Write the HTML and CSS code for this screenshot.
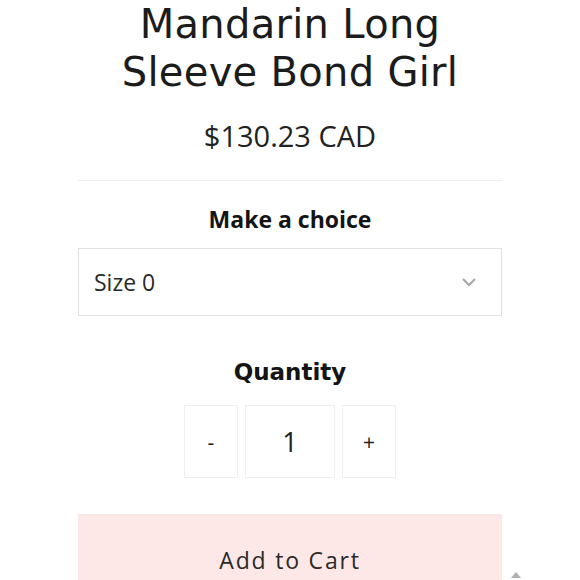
FILE: index.html
```html
<!DOCTYPE html>
<html lang="en">
    <head>
        <meta charset="UTF-8">
        <meta name="viewport" content="width=device-width, initial-scale=1.0">
        <title>Mandarin Long Sleeve Bond Girl</title>
        <link rel="stylesheet" href="styles.css">
    </head>
    <body>
        <div class="producto">
            <h1 class="titulo">Mandarin Long<br>Sleeve Bond Girl</h1>
            <p class="precio">$130.23 CAD</p>

            <!-- Selector de talla -->
            <h2 class="etiqueta">Make a choice</h2>
            <div class="selector">
                <span>Size 0</span>
                <svg class="flecha" width="16" height="10" viewBox="0 0 16 10">
                    <path d="M2 2 L8 8 L14 2" fill="none" stroke="#a8a8a8" stroke-width="2.2"/>
                </svg>
            </div>

            <!-- Cantidad -->
            <h2 class="etiqueta cantidad-titulo">Quantity</h2>
            <div class="cantidad">
                <button class="caja-menos">-</button>
                <div class="caja-numero">1</div>
                <button class="caja-mas">+</button>
            </div>

            <button class="boton-carrito">Add to Cart</button>
        </div>
        <span class="subir"></span>
    </body>
</html>
```

FILE: styles.css
```css
/* Estilos de la ficha de producto */
body {
    margin: 0;
    background-color: #fff;
    color: #1a1a1a;
    font-family: "Open Sans", sans-serif;
    overflow: hidden;
    height: 580px;
    position: relative;
}
.producto {
    width: 424px;
    margin: 0 auto;
    text-align: center;
}
.titulo {
    margin: 0;
    font-family: "DejaVu Sans", sans-serif;
    font-weight: normal;
    font-size: 40px;
    line-height: 48px;
    letter-spacing: 0.3px;
    color: #1c1c1c;
}
.precio {
    margin: 22px 0 0;
    padding-bottom: 26px;
    font-size: 29px;
    line-height: 36px;
    color: #222;
    border-bottom: 1px solid #eeeeee;
}
.etiqueta {
    margin: 23px 0 0;
    font-size: 23px;
    line-height: 30px;
    font-weight: bold;
    color: #141414;
}
.selector {
    margin-top: 14px;
    height: 66px;
    border: 1px solid #e2e2e2;
    display: flex;
    align-items: center;
    justify-content: space-between;
    padding: 0 24px 0 15px;
    font-size: 23px;
    color: #2a2a2a;
}
.flecha {
    display: block;
}
.cantidad-titulo {
    font-family: "DejaVu Sans", sans-serif;
    font-size: 23px;
    margin-top: 41px;
}
.cantidad {
    margin-top: 18px;
    display: flex;
    justify-content: center;
    gap: 7px;
}
.caja-menos, .caja-mas, .caja-numero {
    height: 73px;
    border: 1px solid #efefef;
    background-color: #fff;
    box-sizing: border-box;
    display: flex;
    align-items: center;
    justify-content: center;
    font-family: "Open Sans", sans-serif;
    color: #222;
    padding: 0;
}
.caja-menos, .caja-mas {
    width: 54px;
    font-size: 21px;
}
.caja-numero {
    width: 90px;
    font-size: 27px;
}
.boton-carrito {
    display: block;
    width: 100%;
    margin-top: 36px;
    height: 92px;
    border: none;
    background-color: #fde8e7;
    font-family: "Open Sans", sans-serif;
    font-size: 23px;
    letter-spacing: 1.8px;
    color: #2a2a2a;
    padding: 0;
}
/* Flechita gris abajo a la derecha */
.subir {
    position: absolute;
    left: 511px;
    top: 572px;
    width: 0;
    height: 0;
    border-left: 5px solid transparent;
    border-right: 5px solid transparent;
    border-bottom: 6px solid #b0b0b0;
}
```
